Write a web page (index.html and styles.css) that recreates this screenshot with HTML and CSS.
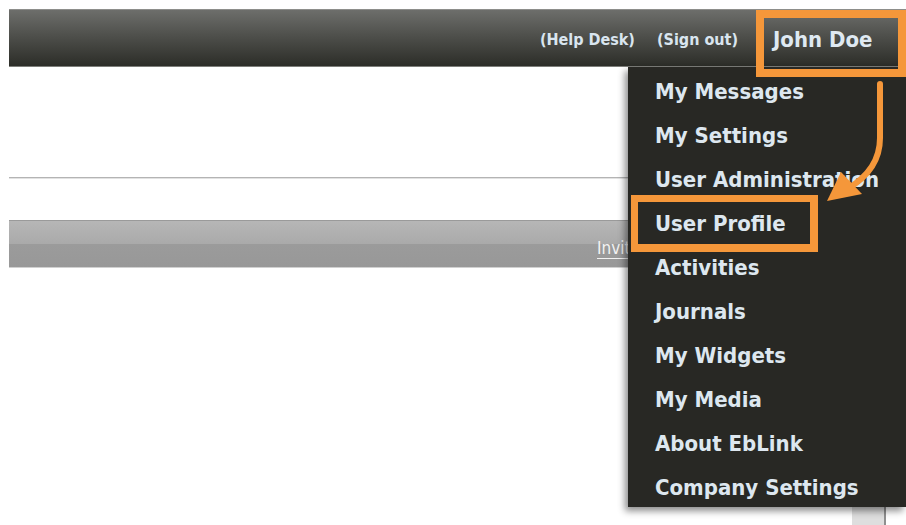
FILE: index.html
```html
<!DOCTYPE html>
<html lang="en">
<head>
<meta charset="utf-8">
<title>EbLink</title>
<link rel="stylesheet" href="styles.css">
</head>
<body>
<div class="page">
  <header class="topbar">
    <nav class="toplinks">
      <a class="toplink" href="#">(Help Desk)</a>
      <a class="toplink" href="#">(Sign out)</a>
      <span class="username">John Doe</span>
    </nav>
  </header>

  <main class="content">
    <div class="intro"></div>
    <div class="rule"></div>
    <div class="toolbar">
      <a class="toolbar-link" href="#">Invite Colleagues</a>
    </div>
  </main>

  <div class="scroll-stub"></div>

  <ul class="usermenu">
    <li><a href="#">My Messages</a></li>
    <li><a href="#">My Settings</a></li>
    <li><a href="#">User Administration</a></li>
    <li><a href="#">User Profile</a></li>
    <li><a href="#">Activities</a></li>
    <li><a href="#">Journals</a></li>
    <li><a href="#">My Widgets</a></li>
    <li><a href="#">My Media</a></li>
    <li><a href="#">About EbLink</a></li>
    <li><a href="#">Company Settings</a></li>
  </ul>

  <div class="callout callout-user"></div>
  <div class="callout callout-profile"></div>

  <svg class="pointer" width="906" height="525" viewBox="0 0 906 525" aria-hidden="true">
    <path d="M880 84 V138 Q880 170 847 189" fill="none" stroke="#f5973a" stroke-width="6" stroke-linecap="round"/>
    <polygon points="827,201 841,172 862,194" fill="#f5973a"/>
  </svg>
</div>
</body>
</html>
```

FILE: styles.css
```css
* {
  box-sizing: border-box;
}

html, body {
  margin: 0;
  padding: 0;
  background: #ffffff;
}

body {
  font-family: "DejaVu Sans Condensed", "DejaVu Sans", Verdana, sans-serif;
  font-stretch: condensed;
  width: 906px;
  height: 525px;
  overflow: hidden;
}

.page {
  position: relative;
  width: 906px;
  height: 525px;
  padding: 9px 0 0 9px;
}

/* dark header strip */
.topbar {
  height: 58px;
  background: linear-gradient(#6d6e6b 0%, #4f504c 45%, #2c2d28 100%);
  border-top: 1px solid #8d8e8b;
  border-bottom: 1px solid #7d7e7a;
  display: flex;
  justify-content: flex-end;
  align-items: center;
}

.toplinks {
  display: flex;
  align-items: center;
  height: 100%;
}

.toplink {
  color: #d9e5ef;
  text-decoration: none;
  font-size: 16px;
  font-weight: bold;
  margin-right: 22px;
  padding-top: 2px;
}

.toplink + .toplink {
  margin-right: 26px;
}

.username {
  color: #dfe9f2;
  font-size: 22px;
  font-weight: bold;
  padding: 3px 0 0 9px;
  width: 142px;
  display: flex;
  align-items: center;
  height: 100%;
}

/* page body under the header */
.content {
  display: flex;
  flex-direction: column;
}

.intro {
  height: 110px;
}

.rule {
  height: 2px;
  background: #b4b4b4;
  border-bottom: 1px solid #e2e2e2;
}

.toolbar {
  margin-top: 41px;
  height: 48px;
  border-top: 1px solid #9a9a9a;
  border-bottom: 1px solid #d0d0d0;
  background: linear-gradient(#b6b6b6 0%, #aaaaaa 50%, #9b9b9b 51%, #989898 100%);
  display: flex;
  align-items: center;
  padding-top: 8px;
}

.toolbar-link {
  margin-left: 588px;
  color: #f2f2f2;
  font-size: 17px;
  white-space: nowrap;
  text-decoration: underline;
  text-underline-offset: 4px;
}

.scroll-stub {
  position: absolute;
  left: 852px;
  top: 490px;
  width: 34px;
  height: 35px;
  background: #dedede;
  border-right: 2px solid #8f8f8f;
}

/* user dropdown */
.usermenu {
  position: absolute;
  top: 67px;
  left: 628px;
  width: 278px;
  height: 440px;
  margin: 0;
  padding: 2px 0 0 0;
  list-style: none;
  background: #282824;
  box-shadow: -3px 4px 7px rgba(0, 0, 0, 0.45);
}

.usermenu li {
  height: 44px;
  display: flex;
  align-items: center;
}

.usermenu a {
  padding-left: 27px;
  color: #dde7ef;
  text-decoration: none;
  font-size: 22px;
  font-weight: bold;
  white-space: nowrap;
}

/* orange highlight frames */
.callout {
  position: absolute;
  border: 8px solid #f5973a;
}

.callout-user {
  left: 756px;
  top: 10px;
  width: 150px;
  height: 67px;
}

.callout-profile {
  left: 631px;
  top: 195px;
  width: 187px;
  height: 57px;
  border-width: 7px 8px 8px 7px;
}

.pointer {
  position: absolute;
  left: 0;
  top: 0;
  pointer-events: none;
}
```
